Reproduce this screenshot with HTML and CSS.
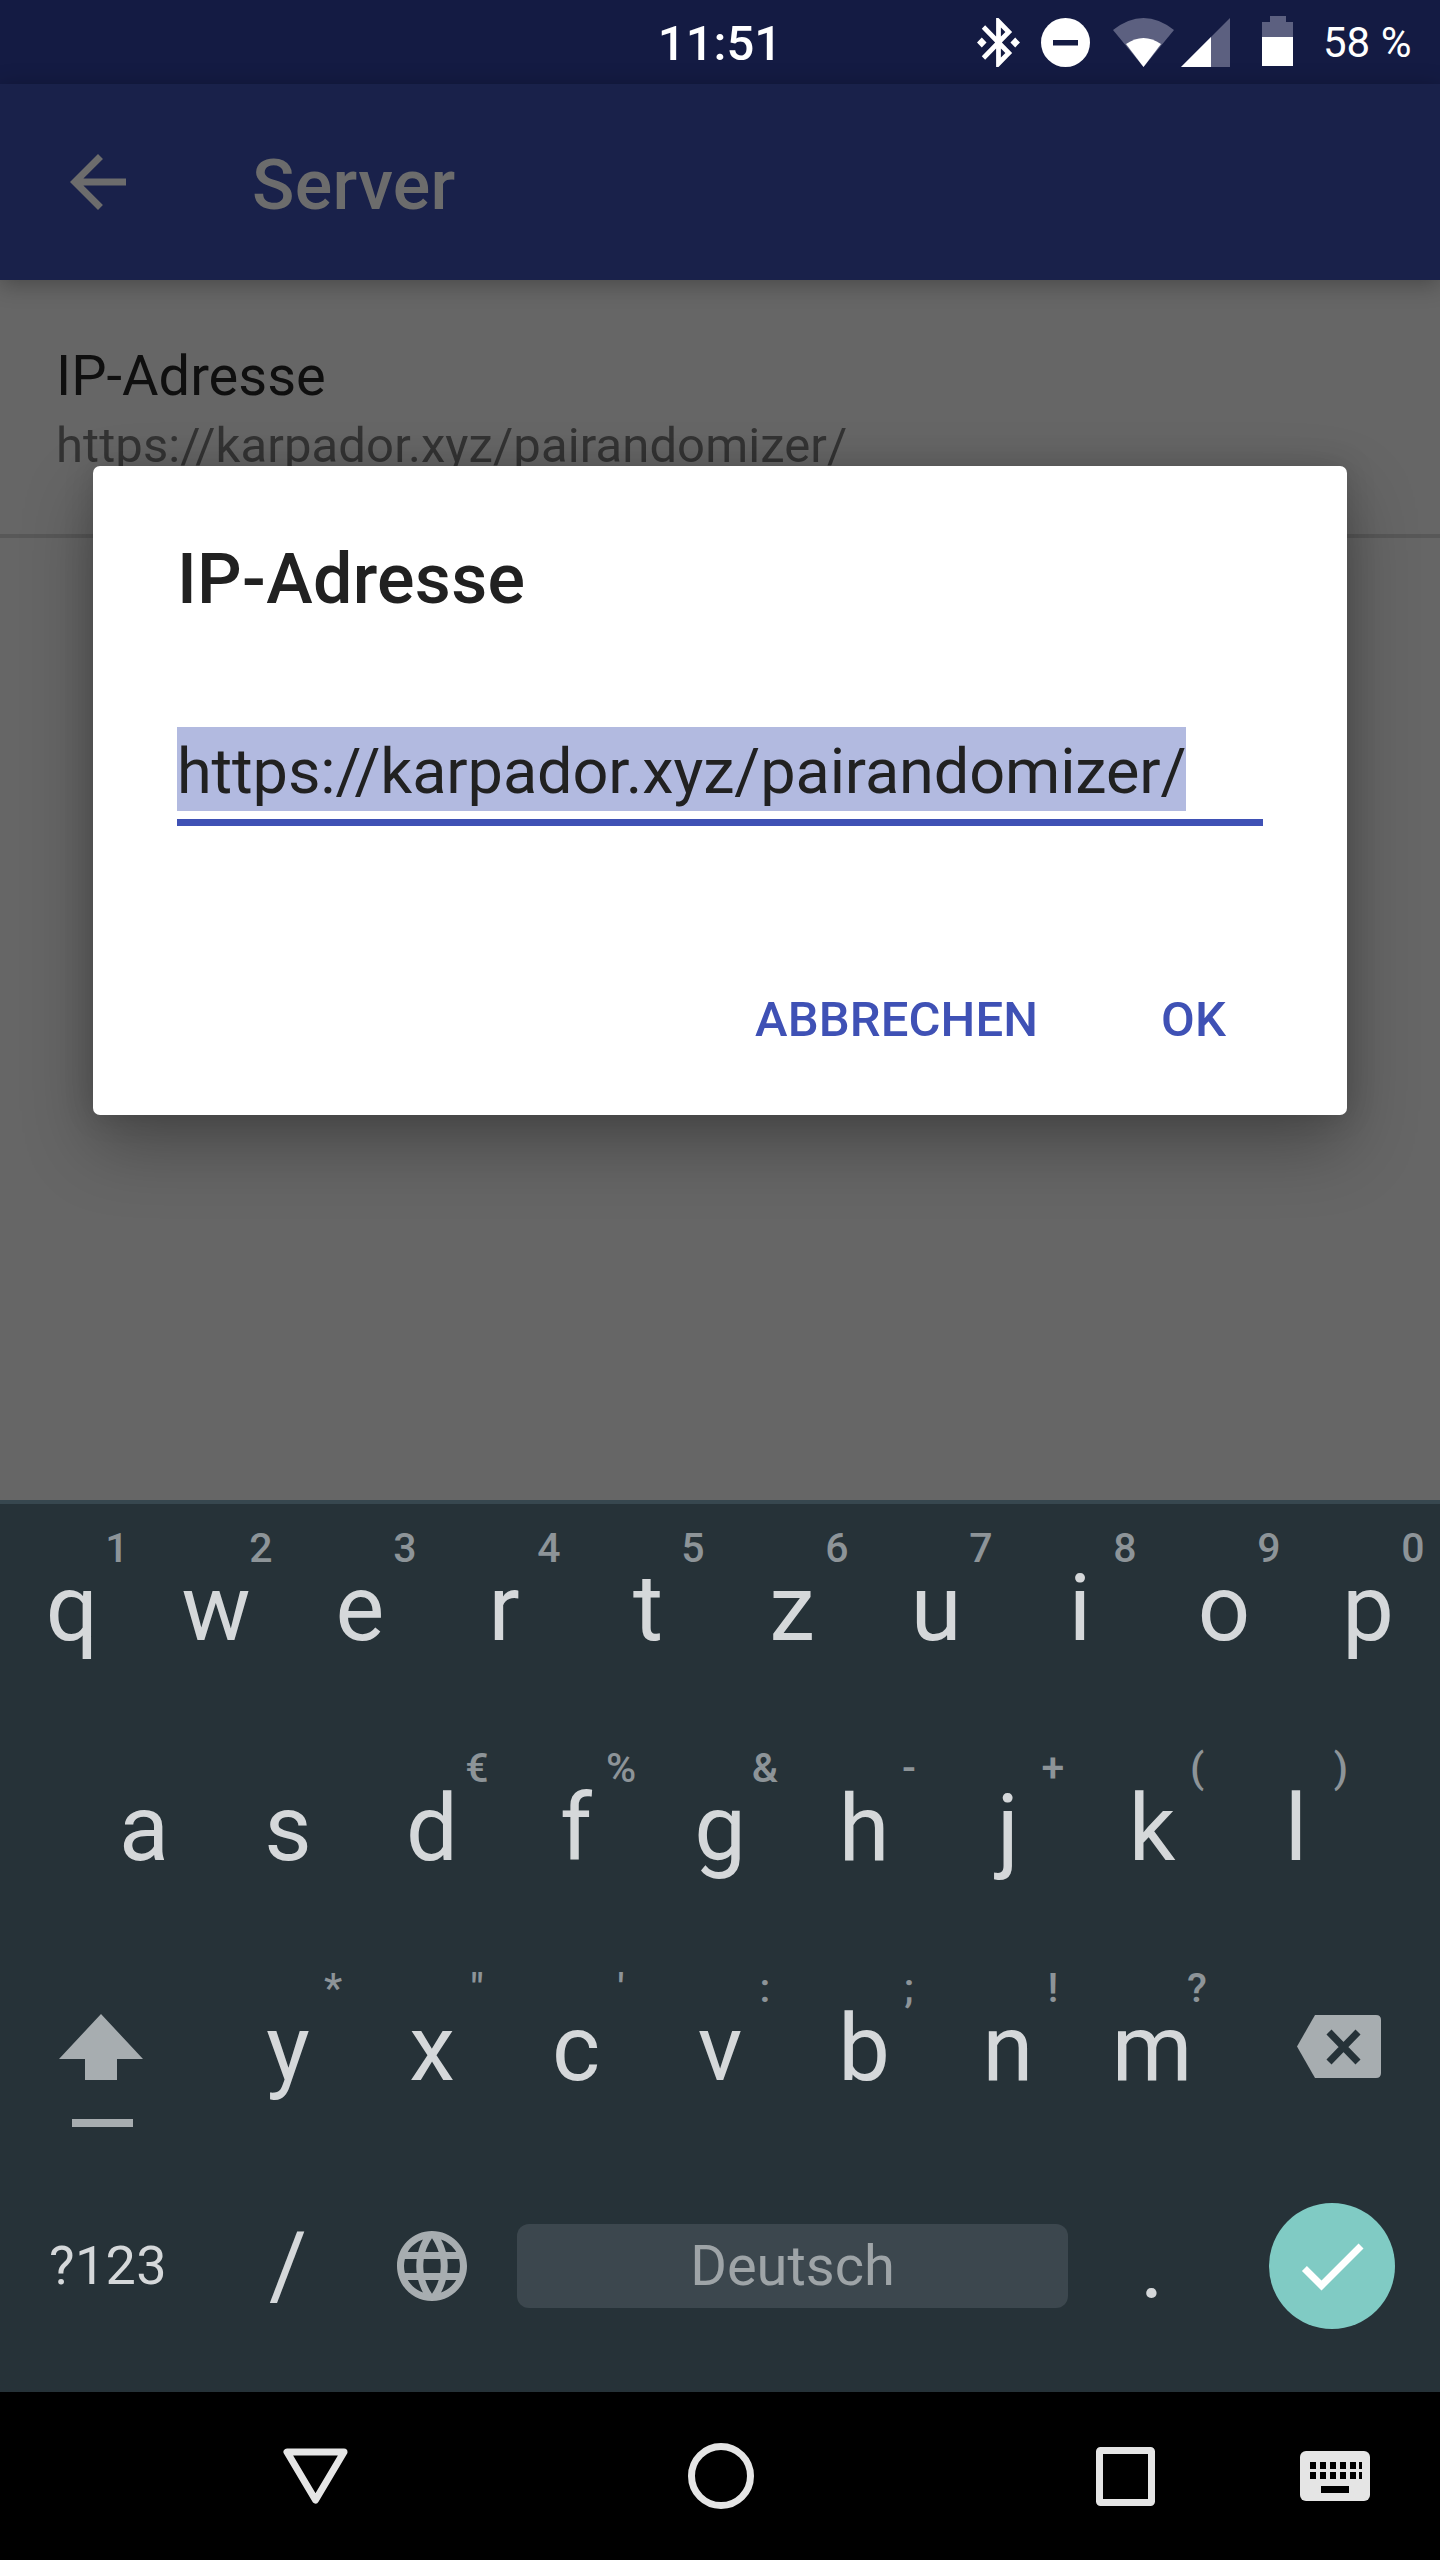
FILE: index.html
```html
<!DOCTYPE html>
<html lang="de">
<head>
  <meta charset="UTF-8">
  <title>Server</title>
  <link rel="stylesheet" href="styles.css">
</head>
<body>
  <div class="screen">
    <div class="statusbar">
      <span></span>
      <span class="clock">11:51</span>
      <div class="status-icons">
        <svg class="ic-bt" viewBox="3 2 18 20" preserveAspectRatio="none"><path fill="#fff" d="M7 12l-2-2-2 2 2 2 2-2zm10.71-4.29L12 2h-1v7.59L6.41 5 5 6.41 10.59 12 5 17.59 6.41 19 11 14.41V22h1l5.71-5.71-4.3-4.29 4.3-4.29zM13 5.83l1.88 1.88L13 9.59V5.83zm1.88 10.46L13 18.17v-3.76l1.88 1.88zM19 10l-2 2 2 2 2-2-2-2z"/></svg>
        <svg class="ic-dnd" viewBox="0 0 49 49"><circle cx="24.5" cy="24.5" r="24.5" fill="#fff"/><rect x="12" y="22" width="25" height="5.5" fill="#141b43"/></svg>
        <svg class="ic-wifi" viewBox="0 0 61 49"><path fill="#5c6080" d="M0 12Q30.5-12 61 12L30.5 49Z"/><path fill="#fff" d="M13 26Q30.500 14 48 26L30.500 49Z"/></svg>
        <svg class="ic-signal" viewBox="0 0 49 49"><path fill="#5c6080" d="M49 0V49H0Z"/><path fill="#fff" d="M0 49L30 19V49Z"/></svg>
        <svg class="ic-battery" viewBox="0 0 31 50"><path fill="#5c6080" d="M8 0H24V6H31V21H0V6H8Z"/><rect y="21" width="31" height="29" fill="#fff"/></svg>
        <span class="battery-text">58 %</span>
      </div>
    </div>

    <div class="toolbar">
      <svg class="back" viewBox="0 0 24 24"><path fill="#6c6c6c" d="M20 11H7.830l5.590-5.590L12 4l-8 8 8 8 1.410-1.410L7.830 13H20v-2z"/></svg>
      <span class="toolbar-title">Server</span>
    </div>

    <div class="content">
      <div class="pref">
        <div class="pref-title">IP-Adresse</div>
        <div class="pref-summary">https://karpador.xyz/pairandomizer/</div>
      </div>

      <div class="dialog">
        <div class="dialog-title">IP-Adresse</div>
        <div class="field"><span class="selected">https://karpador.xyz/pairandomizer/</span></div>
        <div class="actions">
          <span class="action">ABBRECHEN</span>
          <span class="action">OK</span>
        </div>
      </div>
    </div>

    <div class="keyboard">
      <div class="row row-top">
        <div class="key">q<span class="hint">1</span></div>
        <div class="key">w<span class="hint">2</span></div>
        <div class="key">e<span class="hint">3</span></div>
        <div class="key">r<span class="hint">4</span></div>
        <div class="key">t<span class="hint">5</span></div>
        <div class="key">z<span class="hint">6</span></div>
        <div class="key">u<span class="hint">7</span></div>
        <div class="key">i<span class="hint">8</span></div>
        <div class="key">o<span class="hint">9</span></div>
        <div class="key">p<span class="hint">0</span></div>
      </div>
      <div class="row row-home">
        <div class="key">a</div>
        <div class="key">s</div>
        <div class="key">d<span class="hint">€</span></div>
        <div class="key">f<span class="hint">%</span></div>
        <div class="key">g<span class="hint">&amp;</span></div>
        <div class="key">h<span class="hint">-</span></div>
        <div class="key">j<span class="hint">+</span></div>
        <div class="key">k<span class="hint">(</span></div>
        <div class="key">l<span class="hint">)</span></div>
      </div>
      <div class="row row-shift">
        <div class="key key-icon">
          <svg class="shift" viewBox="0 0 84 113">
            <path fill="#a7adb0" d="M42 0L84 45H58V66H26V45H0Z"/>
            <rect x="13" y="105" width="61" height="8" fill="#a7adb0"/>
          </svg>
        </div>
        <div class="key">y<span class="hint">*</span></div>
        <div class="key">x<span class="hint">"</span></div>
        <div class="key">c<span class="hint">'</span></div>
        <div class="key">v<span class="hint">:</span></div>
        <div class="key">b<span class="hint">;</span></div>
        <div class="key">n<span class="hint">!</span></div>
        <div class="key">m<span class="hint">?</span></div>
        <div class="key key-icon">
          <svg class="backspace" viewBox="0 0 84 63">
            <path fill="#a7adb0" d="M18 0H79Q84 0 84 5V58Q84 63 79 63H18L0 31.500Z"/>
            <path stroke="#263238" stroke-width="7" fill="none" d="M32 17L61 47M61 17L32 47"/>
          </svg>
        </div>
      </div>
      <div class="row row-bottom">
        <div class="key key-small">?123</div>
        <div class="key">/</div>
        <div class="key key-icon-center">
          <svg class="globe" viewBox="2 2 20 20"><path fill="#a7adb0" d="M11.990 2C6.470 2 2 6.480 2 12s4.470 10 9.990 10C17.520 22 22 17.520 22 12S17.520 2 11.990 2zm6.930 6h-2.950c-.32-1.250-.78-2.450-1.380-3.560 1.840.63 3.370 1.910 4.330 3.560zM12 4.040c.83 1.200 1.480 2.530 1.910 3.960h-3.820c.43-1.430 1.080-2.760 1.910-3.960zM4.260 14C4.100 13.360 4 12.690 4 12s.1-1.360.26-2h3.380c-.08.66-.14 1.320-.14 2 0 .68.06 1.340.14 2H4.260zm.82 2h2.950c.32 1.250.78 2.450 1.380 3.560-1.840-.63-3.370-1.900-4.330-3.560zm2.950-8H5.080c.96-1.660 2.490-2.930 4.330-3.560C8.810 5.550 8.350 6.750 8.030 8zM12 19.960c-.83-1.200-1.480-2.530-1.910-3.960h3.820c-.43 1.430-1.080 2.760-1.910 3.960zM14.340 14H9.660c-.09-.66-.16-1.320-.16-2 0-.68.07-1.350.16-2h4.680c.09.65.16 1.320.16 2 0 .68-.07 1.340-.16 2zm.25 5.560c.6-1.110 1.060-2.310 1.380-3.560h2.950c-.96 1.650-2.490 2.930-4.330 3.560zM16.360 14c.08-.66.14-1.320.14-2 0-.68-.06-1.340-.14-2h3.380c.16.64.26 1.310.26 2s-.1 1.360-.26 2h-3.380z"/></svg>
        </div>
        <div class="space"><span>Deutsch</span></div>
        <div class="key">.</div>
        <div class="key key-icon-center">
          <div class="enter">
            <svg viewBox="0 0 24 24"><path fill="#fff" d="M9 16.170L4.830 12l-1.420 1.410L9 19 21 7l-1.410-1.410z"/></svg>
          </div>
        </div>
      </div>
    </div>

    <div class="navbar">
      <svg class="nav-back" viewBox="0 0 65 56"><path fill="none" stroke="#e5e5e5" stroke-width="7" stroke-linejoin="round" d="M4 4H61L32.500 52Z"/></svg>
      <svg class="nav-home" viewBox="0 0 66 66"><circle cx="33" cy="33" r="29.500" fill="none" stroke="#e5e5e5" stroke-width="7"/></svg>
      <svg class="nav-recent" viewBox="0 0 59 59"><rect x="3.500" y="3.500" width="52" height="52" rx="1" fill="none" stroke="#e5e5e5" stroke-width="7"/></svg>
      <svg class="nav-ime" viewBox="0 0 70 50">
        <rect width="70" height="50" rx="6" fill="#e5e5e5"/>
        <g fill="#000">
          <rect x="10" y="11" width="6" height="7"/><rect x="20" y="11" width="6" height="7"/><rect x="30" y="11" width="6" height="7"/><rect x="40" y="11" width="6" height="7"/><rect x="50" y="11" width="6" height="7"/><rect x="59" y="11" width="3" height="7"/>
          <rect x="10" y="21" width="6" height="7"/><rect x="20" y="21" width="6" height="7"/><rect x="30" y="21" width="6" height="7"/><rect x="40" y="21" width="6" height="7"/><rect x="50" y="21" width="6" height="7"/><rect x="59" y="21" width="3" height="7"/>
          <rect x="21" y="35" width="28" height="7"/>
        </g>
      </svg>
    </div>
  </div>
</body>
</html>
```

FILE: styles.css
```css
* { box-sizing: border-box; margin: 0; padding: 0; }
body { font-family: Roboto, sans-serif; background: #000; }
.screen {
  width: 1440px; height: 2560px;
  display: flex; flex-direction: column;
  overflow: hidden;
}

/* status bar */
.statusbar {
  height: 84px; flex: none;
  background: #141b43; color: #fff;
  display: grid; grid-template-columns: 1fr auto 1fr; align-items: center;
}
.clock { font-size: 49px; font-weight: 500; margin-top: 2px; }
.status-icons {
  display: flex; align-items: center; justify-content: flex-end;
  padding-right: 33px;
}
.ic-bt { width: 43px; height: 49px; margin-top: 1px; }
.ic-dnd { width: 49px; height: 49px; margin-left: 21px; margin-top: 1px; }
.ic-wifi { width: 61px; height: 49px; margin-left: 23px; }
.ic-signal { width: 49px; height: 49px; margin-left: 7px; }
.ic-battery { width: 31px; height: 50px; margin-left: 32px; margin-top: -2px; }
.battery-text { font-size: 42px; margin-left: 30px; width: 84px; white-space: nowrap; }

/* toolbar */
.toolbar {
  height: 196px; flex: none;
  background: #19214a;
  display: flex; align-items: center;
  padding-left: 56px;
  box-shadow: 0 4px 22px rgba(0,0,0,0.3);
  position: relative; z-index: 1;
}
.back { width: 84px; height: 84px; margin-right: 112px; }
.toolbar-title { font-size: 70px; font-weight: 500; color: #6c6c6c; line-height: 84px; margin-top: 6px; letter-spacing: 0.3px; }

/* preference behind the dialog */
.content { flex: 1; background: #666; position: relative; }
.pref { padding: 61px 0 55px 56px; border-bottom: 4px solid #585858; }
.pref-title { font-size: 56px; line-height: 70px; color: #0f0f0f; }
.pref-summary { font-size: 49px; line-height: 66px; margin-top: 2px; color: #333; letter-spacing: 0.1px; }

/* dialog */
.dialog {
  position: absolute; left: 93px; right: 93px; top: 186px;
  background: #fff; border-radius: 7px;
  padding: 71px 84px 60px;
  box-shadow: 0 30px 70px rgba(0,0,0,0.3), 0 0 30px rgba(0,0,0,0.15);
}
.dialog-title { font-size: 70px; font-weight: 500; line-height: 84px; color: #212121; letter-spacing: 0.3px; }
.field {
  margin-top: 106px; padding-bottom: 8px;
  border-bottom: 7px solid #3f51b5;
  display: flex;
}
.selected {
  height: 84px; line-height: 89px;
  font-size: 63px; color: #212121;
  background: #b2bae0;
  letter-spacing: -0.1px;
  white-space: nowrap;
}
.actions {
  margin-top: 159px; padding-right: 37px;
  display: flex; justify-content: flex-end; gap: 123px;
}
.action { font-size: 49px; font-weight: 500; line-height: 70px; color: #3f51b5; letter-spacing: 0.1px; }

/* keyboard */
.keyboard {
  height: 892px; flex: none;
  background: #263238;
  border-top: 4px solid #37474f;
  padding-top: 1px;
}
.row { display: grid; height: 220px; }
.row-top { grid-template-columns: repeat(10, 1fr); }
.row-home { grid-template-columns: repeat(9, 144px); padding-left: 72px; }
.row-shift { grid-template-columns: 216px repeat(7, 144px) 216px; }
.row-bottom { grid-template-columns: 216px 144px 144px 576px 144px 216px; height: 202px; }
.key {
  position: relative;
  text-align: center;
  font-size: 92px; line-height: 208px;
  color: #d5d8da;
}
.row-bottom .key { line-height: 202px; }
.row-bottom .key-small { font-size: 54px; letter-spacing: 0.3px; }
.hint {
  position: absolute; top: 23px; left: calc(50% + 45px);
  transform: translateX(-50%);
  font-size: 41px; font-weight: 500; line-height: 41px;
  color: #8d9498;
}
.key-icon { display: flex; justify-content: center; }
.key-icon-center { display: flex; justify-content: center; align-items: center; }
.shift { width: 84px; height: 113px; margin: 69px 14px 0 0; }
.backspace { width: 84px; height: 63px; margin: 70px 0 0 14px; }
.globe { width: 70px; height: 70px; }
.space {
  margin: 0 12px 0 13px; height: 84px; align-self: center;
  background: #3c474e; border-radius: 12px;
  display: flex; align-items: center; justify-content: center;
  font-size: 56px; color: #9ea4a7;
}
.enter {
  width: 126px; height: 126px; border-radius: 50%;
  background: #80cbc4;
  display: flex; align-items: center; justify-content: center;
}
.enter svg { width: 84px; height: 84px; }

/* navigation bar */
.navbar {
  height: 168px; flex: none;
  background: #000;
  display: flex; align-items: center;
}
.nav-back { width: 65px; height: 56px; margin-left: 283px; }
.nav-home { width: 66px; height: 66px; margin-left: 340px; }
.nav-recent { width: 59px; height: 59px; margin-left: 342px; }
.nav-ime { width: 70px; height: 50px; margin-left: 145px; }
```
